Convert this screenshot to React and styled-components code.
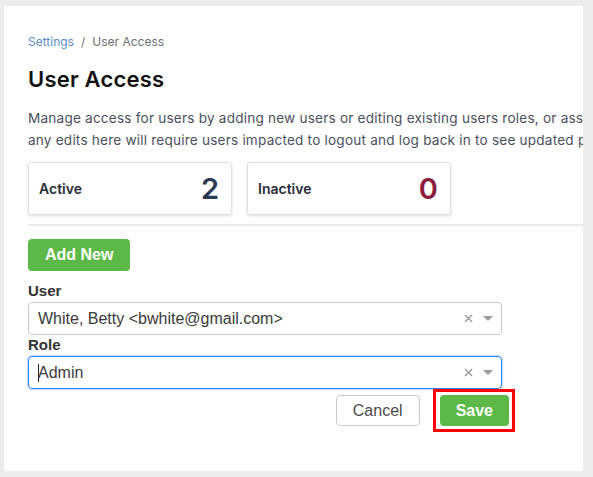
import React from "react";
import styled, { createGlobalStyle } from "styled-components";

const Global = createGlobalStyle`
  html, body { margin: 0; padding: 0; background: #ececec; }
  body { font-family: Inter, "Noto Sans", sans-serif; }
  * { box-sizing: border-box; }
`;

const Panel = styled.main`
  margin: 6px 10px 0 4px;
  height: 465px;
  background: #fff;
  overflow: hidden;
  padding: 27px 0 0 24px;
`;

const Content = styled.div`
  width: 900px;
`;

const Crumbs = styled.nav`
  font-size: 12px;
  line-height: 17px;
  color: #6b6f76;
  display: flex;
  gap: 7px;
`;

const CrumbLink = styled.a`
  color: #5a8dc8;
  text-decoration: none;
`;

const Title = styled.h1`
  margin: 15px 0 0;
  font-size: 22px;
  line-height: 28px;
  font-weight: 600;
  color: #111;
  letter-spacing: 0.2px;
`;

const Description = styled.p`
  margin: 14px 0 0;
  font-size: 13.6px;
  line-height: 22px;
  color: #4b5060;
  white-space: nowrap;
  letter-spacing: 0.2px;
`;

const Stats = styled.div`
  margin-top: 11px;
  display: flex;
  gap: 15px;
`;

const StatCard = styled.div`
  width: 204px;
  height: 53px;
  border: 1px solid #e0e0e0;
  border-radius: 3px;
  box-shadow: 0 1px 3px rgba(0, 0, 0, 0.14);
  display: flex;
  align-items: center;
  justify-content: space-between;
  padding: 0 12px 0 10px;
`;

const StatLabel = styled.span`
  font-size: 14px;
  font-weight: 600;
  color: #2a2d35;
`;

const StatValue = styled.span`
  font-size: 29px;
  font-weight: 600;
  color: ${(p) => p.$tone};
  line-height: 1;
`;

const Divider = styled.hr`
  margin: 9px 0 0;
  border: 0;
  height: 2px;
  background: #ececec;
`;

const Form = styled.div`
  width: 487px;
  margin-top: 13px;
  font-family: "Liberation Sans", Arial, sans-serif;
`;

const PrimaryButton = styled.button`
  display: block;
  font-family: "Liberation Sans", Arial, sans-serif;
  font-size: 16px;
  font-weight: 700;
  color: #fff;
  background: #5cb947;
  border: 0;
  border-radius: 4px;
  height: ${(p) => p.$h}px;
  padding: 0 ${(p) => p.$px}px;
  cursor: pointer;
`;

const Highlight = styled.span`
  display: inline-block;
  border: 3px solid #f00;
  padding: 3px 3px 3px 4px;
  margin-top: -6px;
`;

const SecondaryButton = styled.button`
  font-family: "Liberation Sans", Arial, sans-serif;
  font-size: 16px;
  color: #4a4a4a;
  background: #fff;
  border: 1px solid #ccc;
  border-radius: 4px;
  height: 31px;
  padding: 0 16px;
`;

const Label = styled.label`
  display: block;
  font-size: 15px;
  font-weight: 700;
  line-height: 20px;
  color: #333;
  margin-top: ${(p) => p.$mt || 0}px;
`;

const Select = styled.div`
  margin-top: 1px;
  width: 474px;
  height: 33px;
  border: 1px solid ${(p) => (p.$focused ? "#2684ff" : "#ccc")};
  box-shadow: ${(p) => (p.$focused ? "0 0 0 1px rgba(38,132,255,0.15), 0 0 3px rgba(38,132,255,0.35)" : "none")};
  border-radius: 4px;
  display: flex;
  align-items: center;
  padding: 0 8px 0 9px;
  font-size: 16px;
  color: #3a3a3a;
`;

const Value = styled.span`
  flex: 1;
  display: flex;
  align-items: center;
`;

const Caret = styled.span`
  width: 1px;
  height: 18px;
  background: #222;
  margin-right: -1px;
`;

const Indicators = styled.span`
  display: flex;
  align-items: center;
  gap: 10px;
  color: #999;
`;

const Actions = styled.div`
  display: flex;
  justify-content: flex-end;
  align-items: flex-start;
  gap: 13px;
  margin-top: 6px;
`;

const ClearIcon = () => (
  <svg width="9" height="9" viewBox="0 0 9 9">
    <path d="M1 1L8 8M8 1L1 8" stroke="#9a9a9a" strokeWidth="1.4" />
  </svg>
);

const ArrowIcon = () => (
  <svg width="10" height="5" viewBox="0 0 10 5">
    <path d="M0 0H10L5 5Z" fill="#9a9a9a" />
  </svg>
);

function SelectField({ value, focused }) {
  return (
    <Select $focused={focused}>
      <Value>
        {focused && <Caret />}
        {value}
      </Value>
      <Indicators>
        <ClearIcon />
        <ArrowIcon />
      </Indicators>
    </Select>
  );
}

export default function App() {
  return (
    <>
      <Global />
      <Panel>
        <Content>
          <Crumbs>
            <CrumbLink href="#">Settings</CrumbLink>
            <span>/</span>
            <span>User Access</span>
          </Crumbs>
          <Title>User Access</Title>
          <Description>
            Manage access for users by adding new users or editing existing users roles, or assigning roles to users. Please note that
            <br />
            any edits here will require users impacted to logout and log back in to see updated permissions.
          </Description>
          <Stats>
            <StatCard>
              <StatLabel>Active</StatLabel>
              <StatValue $tone="#2b3a55">2</StatValue>
            </StatCard>
            <StatCard>
              <StatLabel>Inactive</StatLabel>
              <StatValue $tone="#8a1c3c">0</StatValue>
            </StatCard>
          </Stats>
          <Divider />
          <Form>
            <PrimaryButton $h={32} $px={17}>Add New</PrimaryButton>
            <Label $mt={10}>User</Label>
            <SelectField value="White, Betty <bwhite@gmail.com>" />
            <Label>Role</Label>
            <SelectField value="Admin" focused />
            <Actions>
              <SecondaryButton>Cancel</SecondaryButton>
              <Highlight>
                <PrimaryButton $h={31} $px={16}>Save</PrimaryButton>
              </Highlight>
            </Actions>
          </Form>
        </Content>
      </Panel>
    </>
  );
}
